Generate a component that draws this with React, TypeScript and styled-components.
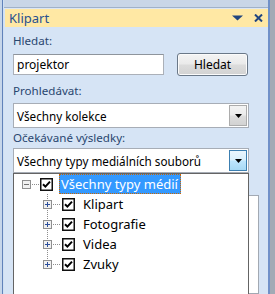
import React from 'react';
import styled, { createGlobalStyle } from 'styled-components';

const GlobalStyle = createGlobalStyle`
  html, body {
    margin: 0;
    padding: 0;
  }
  body {
    background: #c7d4e5;
    font-family: 'Noto Sans', 'Open Sans', sans-serif;
  }
`;

const Frame = styled.div`
  width: 275px;
  height: 294px;
  display: flex;
  overflow: hidden;
  background: #c7d4e5;
`;

const LeftEdge = styled.div`
  width: 4px;
  flex-shrink: 0;
  background: linear-gradient(to right, #c6d6ea 0 2px, #6082ba 2px 3px, #d0e0f2 3px 4px);
`;

const RightEdge = styled.div`
  width: 7px;
  flex-shrink: 0;
  background: linear-gradient(to right, #7090c8 0 2px, #a2aab5 2px 7px);
`;

const Pane = styled.div`
  width: 264px;
  display: flex;
  flex-direction: column;
  background: #d6e4f5;
`;

const TopStrip = styled.div`
  height: 9px;
  flex-shrink: 0;
  background: linear-gradient(to bottom, #c9d6e7 0 7px, #a0b1c9 7px 8px, #dde7f3 8px 9px);
`;

const TitleBar = styled.div`
  height: 18px;
  flex-shrink: 0;
  margin-left: 1px;
  padding: 0 5px 0 4px;
  display: flex;
  align-items: center;
  background: #ffe8a4;
  color: #27508f;
  font-size: 13px;
`;

const TitleText = styled.span`
  flex: 1;
`;

const TitleIcons = styled.div`
  display: flex;
  align-items: center;
  gap: 11px;
`;

const Body = styled.div`
  flex: 1;
  display: flex;
  flex-direction: column;
  padding-left: 9px;
`;

const Label = styled.div<{ $top: number }>`
  margin-top: ${(p) => p.$top}px;
  height: 16px;
  line-height: 16px;
  font-size: 11.6px;
  color: #29466f;
`;

const SearchRow = styled.div`
  margin-top: 4px;
  width: 235px;
  height: 23px;
  display: flex;
  align-items: center;
  justify-content: space-between;
`;

const TextInput = styled.div`
  width: 151px;
  height: 21px;
  box-sizing: border-box;
  border: 1px solid #abb0b8;
  border-top-color: #8e949c;
  background: #fff;
  padding-left: 3px;
  display: flex;
  align-items: center;
  font-size: 12px;
  color: #000;
`;

const SearchButton = styled.div`
  width: 71px;
  height: 23px;
  box-sizing: border-box;
  border: 1px solid #6a7888;
  border-radius: 3px;
  box-shadow: inset 0 0 0 1px #fbfbfb;
  background: linear-gradient(to bottom, #f4f4f4 0%, #eaeaea 48%, #dcdcdc 52%, #d2d2d2 100%);
  display: flex;
  align-items: center;
  justify-content: center;
  font-size: 12px;
  color: #000;
`;

const ComboWrap = styled.div<{ $top: number }>`
  position: relative;
  margin-top: ${(p) => p.$top}px;
  width: 236px;
`;

const Combo = styled.div`
  height: 25px;
  box-sizing: border-box;
  border: 1px solid #a7adb6;
  background: #fff;
  display: flex;
  align-items: center;
  padding-left: 3px;
`;

const ComboText = styled.span`
  flex: 1;
  font-size: 11.7px;
  color: #000;
  white-space: nowrap;
`;

const ComboButton = styled.div<{ $hot?: boolean }>`
  width: 18px;
  height: 21px;
  margin-right: 1px;
  box-sizing: border-box;
  border: 1px solid ${(p) => (p.$hot ? '#3c7fb1' : '#acacac')};
  background: ${(p) =>
    p.$hot
      ? 'linear-gradient(to bottom, #eaf6fd 0%, #d9f0fc 48%, #bee6fd 52%, #a7d9f5 100%)'
      : 'linear-gradient(to bottom, #f3f3f3 0%, #ebebeb 48%, #dddddd 52%, #d2d2d2 100%)'};
  display: flex;
  align-items: center;
  justify-content: center;
`;

const Results = styled.div`
  margin-top: 22px;
  width: 246px;
  flex: 1;
  box-sizing: border-box;
  border: 1px solid #a2a9b3;
  background: #fff;
`;

const Popup = styled.div`
  position: absolute;
  top: 100%;
  left: 0;
  width: 236px;
  height: 140px;
  box-sizing: border-box;
  border: 1px solid #646464;
  background: #fff;
  z-index: 2;
`;

const TreeRow = styled.div<{ $indent: number }>`
  height: 20px;
  display: flex;
  align-items: center;
  padding-left: ${(p) => p.$indent}px;
`;

const Stem = styled.div<{ $last?: boolean; $line?: boolean }>`
  width: 9px;
  height: 20px;
  display: flex;
  align-items: center;
  justify-content: center;
  background: ${(p) =>
    p.$line
      ? `repeating-linear-gradient(to bottom, #8d8d8d 0 1px, transparent 1px 2px) no-repeat 4px 0 / 1px ${p.$last ? '10px' : '20px'}`
      : 'none'};
`;

const Connector = styled.div<{ $w: number }>`
  width: ${(p) => p.$w}px;
  height: 1px;
  margin: 0 1px;
  background: repeating-linear-gradient(to right, #8d8d8d 0 1px, transparent 1px 2px);
`;

const ItemLabel = styled.span<{ $selected?: boolean }>`
  margin-left: 6px;
  height: 20px;
  box-sizing: border-box;
  padding: 0 2px 0 1px;
  display: flex;
  align-items: center;
  font-size: 13px;
  white-space: nowrap;
  color: ${(p) => (p.$selected ? '#fff' : '#000')};
  background: ${(p) => (p.$selected ? '#3399ff' : 'transparent')};
  border: 1px dotted ${(p) => (p.$selected ? '#cc6600' : 'transparent')};
`;

const Expander = ({ open }: { open?: boolean }) => (
  <svg width="9" height="9" viewBox="0 0 9 9" shapeRendering="crispEdges">
    <rect x="0.5" y="0.5" width="8" height="8" fill="#f1f1f1" stroke="#8f8f8f" />
    <path d="M2 4.5h5" stroke={open ? '#727272' : '#2c4f9c'} />
    {!open && <path d="M4.5 2v5" stroke="#2c4f9c" />}
  </svg>
);

const CheckBox = () => (
  <svg width="13" height="13" viewBox="0 0 13 13">
    <rect x="0.75" y="0.75" width="11.5" height="11.5" fill="#fff" stroke="#111" strokeWidth="1.5" />
    <path d="M3 6.2 L5.4 8.6 L10 3.6" fill="none" stroke="#000" strokeWidth="2" />
  </svg>
);

const DropArrow = () => (
  <svg width="7" height="4" viewBox="0 0 7 4">
    <path d="M0 0H7L3.5 4Z" fill="#000" />
  </svg>
);

const children = ['Klipart', 'Fotografie', 'Videa', 'Zvuky'];

export default function App() {
  return (
    <>
      <GlobalStyle />
      <Frame>
        <LeftEdge />
        <Pane>
          <TopStrip />
          <TitleBar>
            <TitleText>Klipart</TitleText>
            <TitleIcons>
              <svg width="11" height="6" viewBox="0 0 11 6">
                <path d="M0 0.5H11L5.5 5.5Z" fill="#21457f" />
              </svg>
              <svg width="9" height="8" viewBox="0 0 9 8">
                <path d="M1 0.5L8 7.5M8 0.5L1 7.5" stroke="#21457f" strokeWidth="2" />
              </svg>
            </TitleIcons>
          </TitleBar>
          <Body>
            <Label $top={6}>Hledat:</Label>
            <SearchRow>
              <TextInput>projektor</TextInput>
              <SearchButton>Hledat</SearchButton>
            </SearchRow>
            <Label $top={7}>Prohledávat:</Label>
            <ComboWrap $top={4}>
              <Combo>
                <ComboText>Všechny kolekce</ComboText>
                <ComboButton>
                  <DropArrow />
                </ComboButton>
              </Combo>
            </ComboWrap>
            <Label $top={2}>Očekávané výsledky:</Label>
            <ComboWrap $top={2}>
              <Combo>
                <ComboText>Všechny typy mediálních souborů</ComboText>
                <ComboButton $hot>
                  <DropArrow />
                </ComboButton>
              </Combo>
              <Popup>
                <TreeRow $indent={8}>
                  <Stem>
                    <Expander open />
                  </Stem>
                  <Connector $w={7} />
                  <CheckBox />
                  <ItemLabel $selected>Všechny typy médií</ItemLabel>
                </TreeRow>
                {children.map((name, i) => (
                  <TreeRow key={name} $indent={29}>
                    <Stem $line $last={i === children.length - 1}>
                      <Expander />
                    </Stem>
                    <Connector $w={8} />
                    <CheckBox />
                    <ItemLabel>{name}</ItemLabel>
                  </TreeRow>
                ))}
              </Popup>
            </ComboWrap>
            <Results />
          </Body>
        </Pane>
        <RightEdge />
      </Frame>
    </>
  );
}
